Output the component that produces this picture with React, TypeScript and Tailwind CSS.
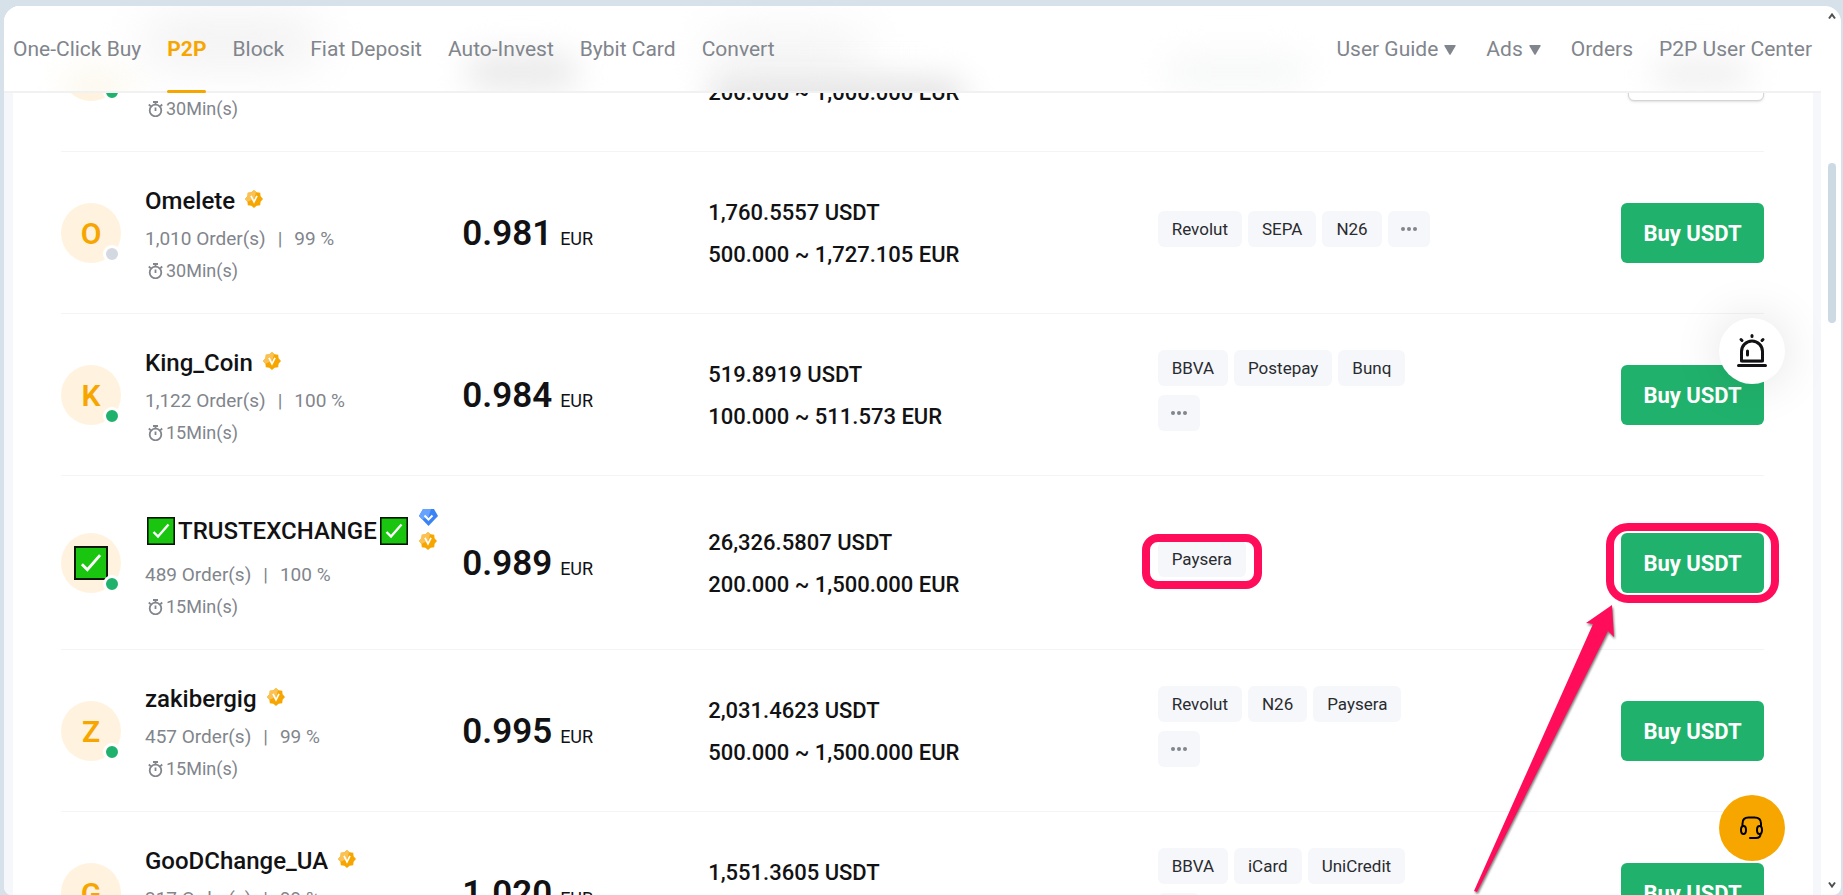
import React from 'react'

type Offer = {
  name: string
  checks?: boolean
  premium?: boolean
  online: boolean
  orders: string
  rate: string
  time: string
  price: string
  amount: string
  limit: string
  methods: string[]
  more: boolean
  marked?: boolean
}

const offers: Offer[] = [
  { name: 'Omelete', online: false, orders: '1,010', rate: '99 %', time: '30Min(s)', price: '0.981', amount: '1,760.5557 USDT', limit: '500.000 ~ 1,727.105 EUR', methods: ['Revolut', 'SEPA', 'N26'], more: true },
  { name: 'King_Coin', online: true, orders: '1,122', rate: '100 %', time: '15Min(s)', price: '0.984', amount: '519.8919 USDT', limit: '100.000 ~ 511.573 EUR', methods: ['BBVA', 'Postepay', 'Bunq'], more: true },
  { name: 'TRUSTEXCHANGE', checks: true, premium: true, online: true, orders: '489', rate: '100 %', time: '15Min(s)', price: '0.989', amount: '26,326.5807 USDT', limit: '200.000 ~ 1,500.000 EUR', methods: ['Paysera'], more: false, marked: true },
  { name: 'zakibergig', online: true, orders: '457', rate: '99 %', time: '15Min(s)', price: '0.995', amount: '2,031.4623 USDT', limit: '500.000 ~ 1,500.000 EUR', methods: ['Revolut', 'N26', 'Paysera'], more: true },
  { name: 'GooDChange_UA', online: true, orders: '317', rate: '99 %', time: '', price: '1.020', amount: '1,551.3605 USDT', limit: '', methods: ['BBVA', 'iCard', 'UniCredit'], more: true },
]

const leftLinks = ['One-Click Buy', 'P2P', 'Block', 'Fiat Deposit', 'Auto-Invest', 'Bybit Card', 'Convert']

function CheckBox({ className }: { className: string }) {
  return (
    <svg viewBox="0 0 28 28" className={className} role="img" aria-label="check">
      <rect x="0.8" y="0.8" width="26.4" height="26.4" fill="#19c50f" stroke="#0c140c" strokeWidth="1.6" />
      <path d="M6.5 15l4.5 4.5L21.5 7.5" fill="none" stroke="#fff" strokeWidth="2.4" />
    </svg>
  )
}

function GoldBadge() {
  return (
    <svg viewBox="0 0 18 18" className="size-[18px] shrink-0">
      <path d="M9 0l2.6 2.2 3.6.6.4 3.5L18 9l-2.4 2.7-.4 3.5-3.6.6L9 18l-2.6-2.2-3.6-.6-.4-3.5L0 9l2.4-2.7.4-3.5 3.6-.6z" fill="#f7a600" />
      <path d="M9 0L6.4 2.2l-3.6.6-.4 3.5L0 9l2.4 2.7L9 9l2-6.5z" fill="#fac254" />
      <path d="M6 5.8l3 6 3-6" fill="none" stroke="#fff" strokeWidth="1.7" />
    </svg>
  )
}

function BlueBadge() {
  return (
    <svg viewBox="0 0 19 17" className="h-[17px] w-[19px] shrink-0">
      <path d="M4 0h11l4 7-9.5 10L0 7z" fill="#3b82f6" />
      <path d="M4 0h8L9.5 8 3 10.300 0 7z" fill="#66a3ff" />
      <path d="M5.500 6.500l4 4 4-4" fill="none" stroke="#fff" strokeWidth="2" />
    </svg>
  )
}

function Stopwatch() {
  return (
    <svg viewBox="0 0 15 16" className="h-4 w-[15px]" fill="none" stroke="#81858c" strokeWidth="1.8">
      <circle cx="7.5" cy="9.500" r="5.800" />
      <path d="M5 1h5M7.500 1v2.500M.8 3.500l2 1.800M14.200 3.500l-2 1.800" strokeWidth="1.800" />
      <path d="M7.500 6.500v3.500" />
    </svg>
  )
}

function Avatar({ online, children }: { online: boolean; children?: React.ReactNode }) {
  return (
    <div className="relative flex size-[60px] shrink-0 items-center justify-center rounded-full bg-[#fff3e0] text-[30px] font-semibold text-[#f7a600]">
      {children}
      <span className={'absolute right-0 bottom-0 size-[18px] rounded-full border-3 border-white ' + (online ? 'bg-[#20b26c]' : 'bg-[#d4d9e1]')} />
    </div>
  )
}

function MoreDots() {
  return (
    <button aria-label="More" className="mb-[9px] flex h-9 w-[42px] items-center justify-center gap-0.5 rounded-md bg-[#f5f7fb]">
      <span className="size-1 rounded-full bg-[#81858c]" />
      <span className="size-1 rounded-full bg-[#81858c]" />
      <span className="size-1 rounded-full bg-[#81858c]" />
    </button>
  )
}

function Arrow() {
  return (
    <svg viewBox="0 0 150 295" className="pointer-events-none absolute top-[67px] -left-[151px] z-20 h-[295px] w-[150px] overflow-visible drop-shadow-[1px_2px_1px_rgba(0,0,0,0.5)]">
      <path d="M142 5l2 32-6-6L7 292l-3-1L123 24l-7-1z" fill="#ff0d5b" />
    </svg>
  )
}

// row that is scrolled halfway under the header
function HiddenRow() {
  return (
    <tr>
      <td className="border-b border-[#f3f4f5] pt-[27px] pb-[26px]">
        <div className="flex items-center gap-6">
          <Avatar online />
          <div className="flex items-center gap-[3px] pt-[76px] pl-[3px] text-[18px] leading-8 text-[#81858c]">
            <Stopwatch />
            30Min(s)
          </div>
        </div>
      </td>
      <td className="border-b border-[#f3f4f5]" />
      <td className="border-b border-[#f3f4f5] pt-11 text-[22px] leading-[42px] font-medium">200.000 ~ 1,000.000 EUR</td>
      <td className="border-b border-[#f3f4f5]" />
      <td className="border-b border-[#f3f4f5]">
        <div className="ml-auto h-[60px] w-[136px] rounded-md border border-[#d4d5d8] bg-white shadow-sm" />
      </td>
    </tr>
  )
}

function OfferRow({ offer }: { offer: Offer }) {
  return (
    <tr>
      <td className="border-b border-[#f3f4f5] pt-[27px] pb-[26px]">
        <div className="flex items-center gap-6">
          <Avatar online={offer.online}>
            {offer.checks ? <CheckBox className="size-[34px]" /> : offer.name[0].toUpperCase()}
          </Avatar>
          <div className="pt-0.5 text-[19px] leading-8 text-[#81858c]">
            <div className={'mb-0.5 flex items-center text-2xl font-medium text-[#121214] ' + (offer.checks ? 'h-[52px] gap-[3px] pl-0.5' : 'h-10')}>
              {offer.checks && <CheckBox className="size-7" />}
              <a href="#">{offer.name}</a>
              {offer.checks && <CheckBox className="size-7" />}
              <span className={'mb-1 flex flex-col items-center gap-1.5 ' + (offer.checks ? 'ml-2' : 'ml-2.5')}>
                {offer.premium && <BlueBadge />}
                <GoldBadge />
              </span>
            </div>
            <div className="flex">
              <span>{offer.orders} Order(s)</span>
              <span className="mx-3">|</span>
              <span>{offer.rate}</span>
            </div>
            <div className="flex h-8 items-center gap-[3px] pl-[3px] text-[18px]">
              <Stopwatch />
              {offer.time}
            </div>
          </div>
        </div>
      </td>
      <td className="border-b border-[#f3f4f5] pt-1 pl-px">
        <span className="text-[35px] font-semibold">{offer.price}</span>
        <span className="ml-2 text-lg">EUR</span>
      </td>
      <td className="border-b border-[#f3f4f5] pt-0.5 text-[22px] leading-[42px] font-medium">
        <div>{offer.amount}</div>
        <div className="h-[42px]">{offer.limit}</div>
      </td>
      <td className="border-b border-[#f3f4f5] pt-px">
        <div className="flex max-w-[284px] flex-wrap gap-x-1.5">
          {offer.methods.map((m) => (
            <span key={m} className="relative mb-[9px] rounded-md bg-[#f5f7fb] px-3.5 text-[17px] leading-9 text-[#2a2b2e]">
              {m}
              {offer.marked && <span className="absolute -top-[7px] -right-4 -bottom-3 -left-4 rounded-2xl border-8 border-[#ff0d5b]" />}
            </span>
          ))}
          {offer.more && <MoreDots />}
        </div>
      </td>
      <td className="border-b border-[#f3f4f5]">
        <div className="relative ml-auto w-[143px]">
          <button className="h-[60px] w-full rounded-md bg-[#20b26c] pt-0.5 text-[22px] font-bold text-white">Buy USDT</button>
          {offer.marked && (
            <>
              <span className="absolute -inset-x-[15px] -inset-y-2.5 rounded-[22px] border-8 border-[#ff0d5b]" />
              <Arrow />
            </>
          )}
        </div>
      </td>
    </tr>
  )
}

// frosted shades of the rows that pass under the header
function HeaderHaze() {
  return (
    <div className="pointer-events-none absolute inset-0 -z-10 overflow-hidden">
      <span className="absolute top-[62px] left-[60px] h-10 w-16 rounded-full bg-[#fbf8ec] blur-lg" />
      <span className="absolute top-3 left-[140px] h-12 w-44 rounded-full bg-[#f1f1f1] blur-xl" />
      <span className="absolute top-12 left-[462px] h-9 w-28 rounded-full bg-[#e9e9e9] blur-lg" />
      <span className="absolute top-7 left-[705px] h-9 w-40 rounded-full bg-[#f1f1f1] blur-xl" />
      <span className="absolute top-[74px] left-[705px] h-8 w-64 rounded-full bg-[#e0e0e0] blur-lg" />
      <span className="absolute top-12 left-[1160px] h-9 w-36 rounded-full bg-[#f7f8f8] blur-lg" />
      <span className="absolute top-13 left-[1650px] h-8 w-24 rounded-full bg-[#f0f0f0] blur-lg" />
    </div>
  )
}

function Header() {
  return (
    <header className="absolute inset-x-0 top-0 z-30 flex h-[87px] items-center justify-between border-b-2 border-[#f1f1f2] bg-white px-[9px] pt-0.5 text-[21px] text-[#81858c]">
      <HeaderHaze />
      <nav className="flex h-full gap-[26px]">
        {leftLinks.map((l) => (
          <a key={l} href="#" className={'relative flex items-center ' + (l === 'P2P' ? 'font-bold text-[#f7a600]' : '')}>
            {l}
            {l === 'P2P' && <span className="absolute inset-x-0 -bottom-0.5 h-[3px] rounded-sm bg-[#f7a600]" />}
          </a>
        ))}
      </nav>
      <nav className="flex items-center gap-[26px]">
        {['User Guide', 'Ads'].map((l) => (
          <button key={l} className="flex items-center gap-1.5 pr-1">
            {l}
            <svg viewBox="0 0 12 10" className="h-2.5 w-3" fill="#81858c">
              <path d="M1 0h10q1 0 .6 1L6.600 9.500q-.6.800-1.200 0L.4 1Q0 0 1 0z" />
            </svg>
          </button>
        ))}
        <a href="#">Orders</a>
        <a href="#">P2P User Center</a>
      </nav>
    </header>
  )
}

function App() {
  return (
    <div className="h-screen overflow-hidden bg-[#d7e1ea] pt-1.5 pr-0.5 pl-1 font-[Roboto,sans-serif] text-[#121214]">
      <div className="flex h-full overflow-hidden rounded-t-2xl rounded-b-lg bg-white">
        <main className="relative grow overflow-hidden bg-[#f5f7fb] pr-2 pl-[9px]">
          <Header />
          <div className="-mt-4 bg-white pr-[49px] pl-12">
            <table className="w-full table-fixed border-separate border-spacing-0">
              <colgroup>
                <col className="w-[23.5%]" />
                <col className="w-[14.5%]" />
                <col className="w-[26.4%]" />
                <col className="w-[22%]" />
                <col />
              </colgroup>
              <tbody>
                <HiddenRow />
                {offers.map((o) => (
                  <OfferRow key={o.name} offer={o} />
                ))}
              </tbody>
            </table>
          </div>

          <button aria-label="Alerts" className="absolute top-[312px] right-9 flex size-[66px] items-center justify-center rounded-full bg-white shadow-[0_0_50px_rgba(0,0,0,0.12)]">
            <svg viewBox="0 0 32 36" className="h-9 w-8" fill="none" stroke="#121214" strokeWidth="3" strokeLinecap="round">
              <path d="M6 28.500h20" stroke="#c9c9cb" strokeLinecap="butt" />
              <path d="M5.500 28V18.500a10.500 10.500 0 0 1 21 0V28z" strokeLinejoin="round" />
              <path d="M2.500 32.500h27M11.500 18v4M16 2.500v1M5 6.500l1 1M27 6.500l-1 1" />
            </svg>
          </button>
          <button aria-label="Support" className="absolute right-9 bottom-[34px] flex size-[66px] items-center justify-center rounded-full bg-[#f7a600]">
            <svg viewBox="0 0 24 24" className="size-6" fill="none" stroke="#000" strokeWidth="2" strokeLinecap="round">
              <path d="M2.500 10V7.500Q2.500 1.500 8.500 1.500h6q6.500 0 6.500 6V10M20.500 18q0 4-4.500 4H10" />
              <ellipse cx="3.500" cy="14" rx="2.500" ry="4" />
              <ellipse cx="19.500" cy="14" rx="2.500" ry="4" />
            </svg>
          </button>
        </main>

        <div className="flex w-5 shrink-0 flex-col items-center py-1.5 pl-0.5">
          <svg viewBox="0 0 8 8" className="size-2" fill="none" stroke="#505050" strokeWidth="2">
            <path d="M1 6.500l3-4 3 4" />
          </svg>
          <div className="mt-[143px] h-40 w-2 rounded-full bg-[#cedae3]" />
          <svg viewBox="0 0 8 8" className="mt-auto size-2" fill="none" stroke="#505050" strokeWidth="2">
            <path d="M1 1.500l3 4 3-4" />
          </svg>
        </div>
      </div>
    </div>
  )
}

export default App
